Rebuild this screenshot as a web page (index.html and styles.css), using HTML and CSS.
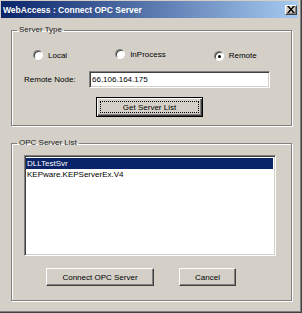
FILE: index.html
```html
<!DOCTYPE html>
<html lang="en">
<head>
    <meta charset="UTF-8">
    <title>WebAccess : Connect OPC Server</title>
    <link rel="stylesheet" href="styles.css">
</head>
<body>

<div class="window">
    <div class="titlebar">
        <span class="title">WebAccess : Connect OPC Server</span>
        <button class="close" aria-label="Close">
            <svg width="8" height="7" viewBox="0 0 8 7">
                <path d="M0 0h2l2 2.5L6 0h2L5 3.5 8 7H6L4 4.5 2 7H0l3-3.5z" fill="#000"/>
            </svg>
        </button>
    </div>

    <div class="content">
        <fieldset class="group group-type">
            <legend>Server Type</legend>
            <div class="radio-row">
                <label class="radio"><span class="dot"></span>Local</label>
                <label class="radio radio-mid"><span class="dot"></span>InProcess</label>
                <label class="radio radio-last"><span class="dot checked"></span>Remote</label>
            </div>
            <div class="node-row">
                <label for="node">Remote Node:</label>
                <input type="text" id="node" value="66.106.164.175">
            </div>
            <div class="center-row">
                <button class="btn btn-default"><span>Get Server List</span></button>
            </div>
        </fieldset>

        <fieldset class="group group-list">
            <legend>OPC Server List</legend>
            <ul class="listbox">
                <li class="selected">DLLTestSvr</li>
                <li>KEPware.KEPServerEx.V4</li>
            </ul>
            <div class="button-row">
                <button class="btn btn-connect">Connect OPC Server</button>
                <button class="btn btn-cancel">Cancel</button>
            </div>
        </fieldset>
    </div>
</div>

</body>
</html>
```

FILE: styles.css
```css
body {
    margin: 0;
    padding: 0;
    font-family: "Liberation Sans", Arial, sans-serif;
    font-size: 8px;
    background-color: #d4d0c8;
}

.window {
    width: 302px;
    height: 313px;
    box-sizing: border-box;
    padding: 1px;
    border-right: 1px solid #404040;
    border-bottom: 1px solid #404040;
    box-shadow: inset -1px -1px 0 #808080;
    background-color: #d4d0c8;
    display: flex;
    flex-direction: column;
}

.titlebar {
    height: 17px;
    margin-right: 2px;
    display: flex;
    align-items: center;
    justify-content: space-between;
    padding: 0 1px 0 2px;
    background: linear-gradient(to right, #0a246a, #a6caf0);
}

.title {
    color: #fff;
    font-family: "Liberation Sans", Arial, sans-serif;
    font-weight: bold;
    font-size: 8.5px;
}

.close {
    width: 12px;
    height: 10px;
    padding: 0;
    display: flex;
    align-items: center;
    justify-content: center;
    background-color: #d4d0c8;
    border: 1px solid;
    border-color: #fff #404040 #404040 #fff;
    box-shadow: inset -1px -1px 0 #808080;
}

.content {
    padding: 7px 8px 0 10px;
    display: flex;
    flex-direction: column;
    gap: 12px;
}

.group {
    margin: 0;
    padding: 0;
    border: 1px solid #808080;
    box-shadow: inset 1px 1px 0 #fff, 1px 1px 0 #fff;
    color: #000;
}

.group legend {
    margin-left: 5px;
    padding: 0 2px;
    line-height: 10px;
    color: #222;
}

.radio-row {
    display: flex;
    align-items: center;
    padding: 14px 0 0 21px;
    height: 12px;
}

.radio {
    display: flex;
    align-items: center;
    gap: 5px;
}

.radio-mid {
    margin-left: 48px;
    margin-top: -2px;
}

.radio-last {
    margin-left: 48px;
    margin-top: 1px;
}

.dot {
    width: 8px;
    height: 8px;
    border-radius: 50%;
    background-color: #fff;
    border: 1px solid;
    border-color: #808080 #fff #fff #808080;
    box-shadow: inset 1px 1px 0 #404040;
    position: relative;
}

.dot.checked::after {
    content: "";
    position: absolute;
    left: 3px;
    top: 3px;
    width: 3px;
    height: 3px;
    border-radius: 50%;
    background-color: #000;
}

.node-row {
    display: flex;
    align-items: center;
    margin-top: 10px;
    padding-left: 12px;
}

.node-row label {
    width: 65px;
}

.node-row input {
    width: 181px;
    height: 17px;
    box-sizing: border-box;
    margin: 0;
    padding: 0 2px;
    font: inherit;
    border: 1px solid;
    border-color: #808080 #fff #fff #808080;
    box-shadow: inset 1px 1px 0 #404040, inset -1px -1px 0 #d4d0c8;
    background-color: #fff;
}

.center-row {
    display: flex;
    padding: 9px 0 8px 84px;
}

.btn {
    margin: 0;
    padding: 0;
    font: inherit;
    color: #000;
    background-color: #d4d0c8;
    border: 1px solid;
    border-color: #fff #404040 #404040 #fff;
    box-shadow: inset -1px -1px 0 #808080;
}

.btn-default {
    width: 107px;
    height: 20px;
    border: 1px solid #000;
    box-shadow: inset 1px 1px 0 #fff, inset -1px -1px 0 #404040, inset -2px -2px 0 #808080;
    padding: 3px;
    display: flex;
}

.btn-default span {
    flex: 1;
    display: flex;
    align-items: center;
    justify-content: center;
    border: 1px dotted #000;
}

.listbox {
    list-style: none;
    margin: 7px 15px 0 12px;
    padding: 2px 2px 2px 1px;
    height: 101px;
    box-sizing: border-box;
    background-color: #fff;
    border: 1px solid;
    border-color: #808080 #fff #fff #808080;
    box-shadow: inset 1px 1px 0 #404040, inset -1px -1px 0 #d4d0c8;
}

.listbox li {
    height: 11px;
    line-height: 11px;
    padding-left: 1px;
}

.listbox li.selected {
    background-color: #0a246a;
    color: #fff;
}

.button-row {
    display: flex;
    gap: 25px;
    padding: 12px 0 14px 34px;
}

.btn-connect {
    width: 108px;
    height: 18px;
}

.btn-cancel {
    width: 57px;
    height: 18px;
}
```
